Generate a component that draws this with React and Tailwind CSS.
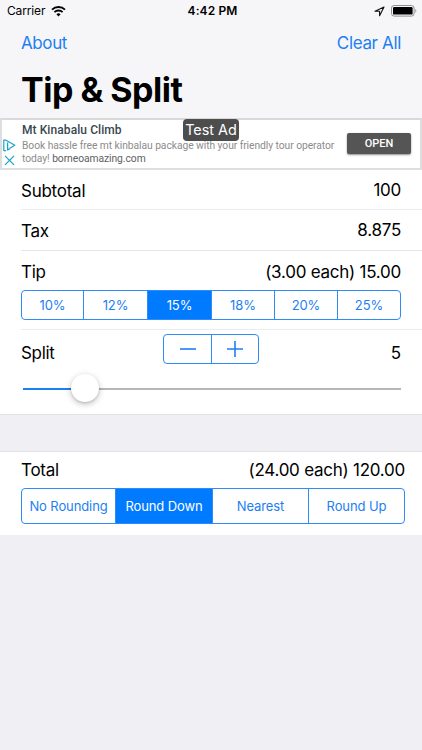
import { useState } from "react";

const TIPS = [10, 12, 15, 18, 20, 25];
const ROUNDINGS = ["No Rounding", "Round Down", "Nearest", "Round Up"];

const TIP_WIDTHS = ["w-[61px]", "w-[64px]", "w-[64px]", "w-[63px]", "w-[63px]", "flex-1"];
const ROUND_WIDTHS = ["w-[93px]", "w-[97px]", "w-[96px]", "flex-1"];

function StatusBar() {
  return (
    <div className="grid grid-cols-3 h-[22px] pl-[7px] pr-[5px] items-center text-[12px] leading-none">
      <div className="flex items-center gap-[6px]">
        <span className="tracking-[-0.15px]">Carrier</span>
        <svg width="15" height="11" viewBox="0 0 15 11">
          <path d="M7.5 10.4 5.4 8.2a3 3 0 0 1 4.2 0z" fill="#000" />
          <path d="M3.4 6.2a5.8 5.8 0 0 1 8.2 0" fill="none" stroke="#000" strokeWidth="1.8" />
          <path d="M1 3.7a9.2 9.2 0 0 1 13 0" fill="none" stroke="#000" strokeWidth="1.8" />
        </svg>
      </div>
      <div className="text-center font-semibold tracking-[0.1px] pl-px">4:42 PM</div>
      <div className="flex items-center justify-end gap-[6px]">
        <svg width="11" height="11" viewBox="0 0 11 11">
          <path d="M10 1 1 5.2h4.6v4.6z" fill="none" stroke="#111" strokeWidth="1.1" strokeLinejoin="round" />
        </svg>
        <svg width="26" height="12" viewBox="0 0 26 12">
          <rect x="0.5" y="0.5" width="22.6" height="10.6" rx="2.6" fill="none" stroke="#8f8f91" />
          <rect x="2" y="2" width="19.6" height="7.6" rx="1.2" fill="#000" />
          <path d="M24.4 4v3.8c1.2-.6 1.2-3.2 0-3.8z" fill="#8f8f91" />
        </svg>
      </div>
    </div>
  );
}

function AdBanner() {
  return (
    <div className="relative h-[52px] border-2 border-[#dedede] border-t-[#d9d9d9] bg-white flex font-[Roboto,sans-serif]">
      <div className="w-5 shrink-0 pt-[19px] pl-px flex flex-col gap-[3px]">
        <svg width="13" height="13" viewBox="0 0 13 13" fill="none" stroke="#1ba5c4" strokeWidth="1.2">
          <path d="M3 11.6H.8V1.1h1.8l9.2 5.2-5 2.9" strokeLinejoin="round" />
          <path d="M4.6 3.4v7.6l2.4-1.4" strokeWidth="1.3" strokeLinejoin="round" />
        </svg>
        <svg width="13" height="12" viewBox="0 0 13 12" stroke="#1ba5c4" strokeWidth="1.3">
          <path d="m2 .9 9 9M11 .9l-9 9" />
        </svg>
      </div>
      <div className="flex-1 min-w-0 pt-[3px] whitespace-nowrap">
        <p className="text-[12px] leading-[15px] font-medium text-[#37474f] tracking-[0.08px]">Mt Kinabalu Climb</p>
        <p className="mt-[1px] text-[10.3px] leading-[13px] text-[#8c8c8c] tracking-[-0.06px]">
          Book hassle free mt kinbalau package with your friendly tour operator
          <br />
          today! <span className="text-[#616161]">borneoamazing.com</span>
        </p>
      </div>
      <button className="self-start shrink-0 mt-[13px] mr-[9px] w-[64px] h-[21px] rounded-[2px] bg-[#555] text-white text-[11px] font-medium leading-none shadow-[0_1px_2px_rgba(0,0,0,0.45)]">
        OPEN
      </button>
      <div className="absolute left-[181px] -top-[1px] w-[56px] h-[22px] rounded-[4px] bg-[#4d4d4d] text-white text-[14.4px] leading-[22px] text-center whitespace-nowrap font-[Inter,sans-serif]">
        Test Ad
      </div>
    </div>
  );
}

function Segmented({ items, widths, value, onChange, className }) {
  return (
    <div className={`flex rounded-[4px] border border-[#2f8bf5] overflow-hidden text-[13px] tracking-[-0.1px] ${className}`}>
      {items.map((item, i) => (
        <button
          key={item.value}
          onClick={() => onChange(item.value)}
          className={`whitespace-nowrap ${widths[i]} ${i > 0 ? "border-l border-[#2f8bf5]" : ""} ${
            value === item.value ? "bg-[#007aff] text-white" : "text-[#1c80f3]"
          }`}
        >
          {item.label}
        </button>
      ))}
    </div>
  );
}

function roundTotal(total, mode) {
  if (mode === "Round Down") return Math.floor(total / 5) * 5;
  if (mode === "Nearest") return Math.round(total);
  if (mode === "Round Up") return Math.ceil(total);
  return total;
}

export default function App() {
  const [tip, setTip] = useState(15);
  const [split, setSplit] = useState(5);
  const [rounding, setRounding] = useState("Round Down");

  const subtotal = 100;
  const tax = 8.875;
  const tipAmount = (subtotal * tip) / 100;
  const total = roundTotal(subtotal + tax + tipAmount, rounding);
  // thumb centre, in px from the start of the track
  const thumb = 14 + (split - 1) * 12.1;

  return (
    <div className="w-[422px] h-[750px] bg-[#efeff4] overflow-hidden font-[Inter,sans-serif] text-black">
      <header className="h-[118px] bg-[#f6f6f8]">
        <StatusBar />
        <div className="flex justify-between pl-[21px] pr-[21px] pt-[10px] text-[17px] leading-[22px] text-[#1c80f3]">
          <button className="tracking-[-0.4px]">About</button>
          <button className="tracking-[-0.35px]">Clear All</button>
        </div>
        <h1 className="pl-[21px] pt-[15px] text-[34px] leading-[42px] font-bold tracking-[-0.5px]">Tip &amp; Split</h1>
      </header>

      <AdBanner />

      <section className="bg-white h-[245px] pl-[21px] text-[17px] leading-[20px] border-b border-[#e1e1e6]">
        <div className="h-[40px] flex justify-between pt-[10px] pr-[21px] border-b border-[#ececee] tracking-[-0.25px]">
          <span className="pt-px">Subtotal</span>
          <span>100</span>
        </div>
        <div className="h-[41px] flex justify-between pt-[10px] pr-[21px] border-b border-[#e6e6e8] tracking-[-0.25px]">
          <span className="pt-px">Tax</span>
          <span>8.875</span>
        </div>
        <div className="h-[79px] pt-[11px] border-b border-[#ececee]">
          <div className="flex justify-between pr-[21px] tracking-[-0.25px]">
            <span>Tip</span>
            <span>({(tipAmount / split).toFixed(2)} each) {tipAmount.toFixed(2)}</span>
          </div>
          <Segmented
            items={TIPS.map((t) => ({ value: t, label: `${t}%` }))}
            widths={TIP_WIDTHS}
            value={tip}
            onChange={setTip}
            className="mt-[8px] w-[380px] h-[30px]"
          />
        </div>
        <div className="flex justify-between pt-[4px] pr-[21px]">
          <span className="w-[142px] pt-[9px] tracking-[-0.3px]">Split</span>
          <div className="flex w-[96px] h-[30px] rounded-[4px] border border-[#2f8bf5] text-[#007aff]">
            <button onClick={() => setSplit(Math.max(1, split - 1))} className="w-[47px] flex items-center justify-center">
              <svg width="16" height="16" viewBox="0 0 16 16" stroke="#1c80f3" strokeWidth="1.6"><path d="M0 8h16" /></svg>
            </button>
            <button onClick={() => setSplit(Math.min(30, split + 1))} className="flex-1 flex items-center justify-center border-l border-[#2f8bf5]">
              <svg width="16" height="16" viewBox="0 0 16 16" stroke="#1c80f3" strokeWidth="1.6"><path d="M0 8h16M8 0v16" /></svg>
            </button>
          </div>
          <span className="w-[142px] pt-[9px] text-right">{split}</span>
        </div>
        <div className="relative mt-[24px] ml-[2px] w-[378px] h-[2px] bg-[#b7b7b7]">
          <div className="h-full bg-[#1c80f3]" style={{ width: thumb }} />
          <div
            className="absolute -top-[14px] w-7 h-7 -ml-[14px] rounded-full bg-white shadow-[0_2px_6px_rgba(0,0,0,0.25),0_1px_2px_rgba(0,0,0,0.12)]"
            style={{ left: thumb }}
          />
        </div>
      </section>

      <section className="mt-[36px] h-[84px] bg-white pl-[21px] pt-[8px] text-[17px] leading-[20px] border-t border-[#e1e1e6]">
        <div className="flex justify-between pr-[17px] tracking-[-0.25px]">
          <span>Total</span>
          <span>({(total / split).toFixed(2)} each) {total.toFixed(2)}</span>
        </div>
        <Segmented
          items={ROUNDINGS.map((r) => ({ value: r, label: r }))}
          widths={ROUND_WIDTHS}
          value={rounding}
          onChange={setRounding}
          className="mt-[8px] w-[384px] h-[36px]"
        />
      </section>
    </div>
  );
}
